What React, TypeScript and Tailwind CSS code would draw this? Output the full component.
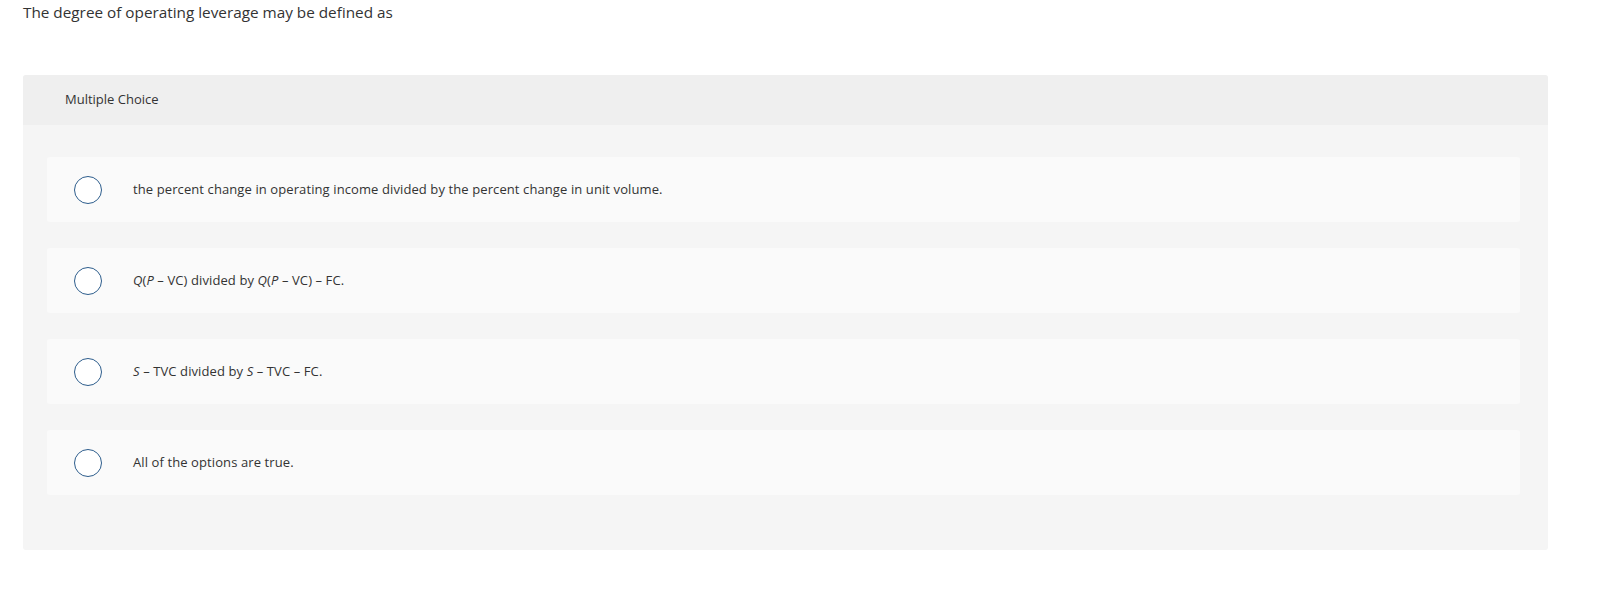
import React from "react";

type Option = {
  id: string;
  content: React.ReactNode;
};

const options: Option[] = [
  {
    id: "a",
    content: "the percent change in operating income divided by the percent change in unit volume.",
  },
  {
    id: "b",
    content: (
      <>
        <i>Q</i>(<i>P</i> – VC) divided by <i>Q</i>(<i>P</i> – VC) – FC.
      </>
    ),
  },
  {
    id: "c",
    content: (
      <>
        <i>S</i> – TVC divided by <i>S</i> – TVC – FC.
      </>
    ),
  },
  {
    id: "d",
    content: "All of the options are true.",
  },
];

export default function App() {
  return (
    <div className="min-h-[595px] w-full bg-white font-['Open_Sans','Liberation_Sans',sans-serif] text-[#333333]">
      <div className="pl-[23px] pt-[1px] text-[15.3px] leading-[22px]">The degree of operating leverage may be defined as</div>

      <div className="ml-[23px] mt-[52px] w-[1525px] rounded-[3px] bg-[#f5f5f5]">
        {/* header */}
        <div className="flex h-[50px] items-center rounded-t-[3px] bg-[#efefef] pl-[42px] text-[13px]">Multiple Choice</div>

        {/* choices */}
        <div className="flex flex-col gap-[26px] pb-[55px] pl-[24px] pr-[28px] pt-[32px]">
          {options.map((o) => (
            <label
              key={o.id}
              className="flex h-[65px] cursor-pointer items-center rounded-[3px] bg-[#fafafa] pl-[27px]"
            >
              <span className="h-[28px] w-[28px] shrink-0 rounded-full border-[1.5px] border-[#2d5d8c] bg-white" />
              <span className="ml-[31px] text-[13px] tracking-[0.1px]">{o.content}</span>
            </label>
          ))}
        </div>
      </div>
    </div>
  );
}
